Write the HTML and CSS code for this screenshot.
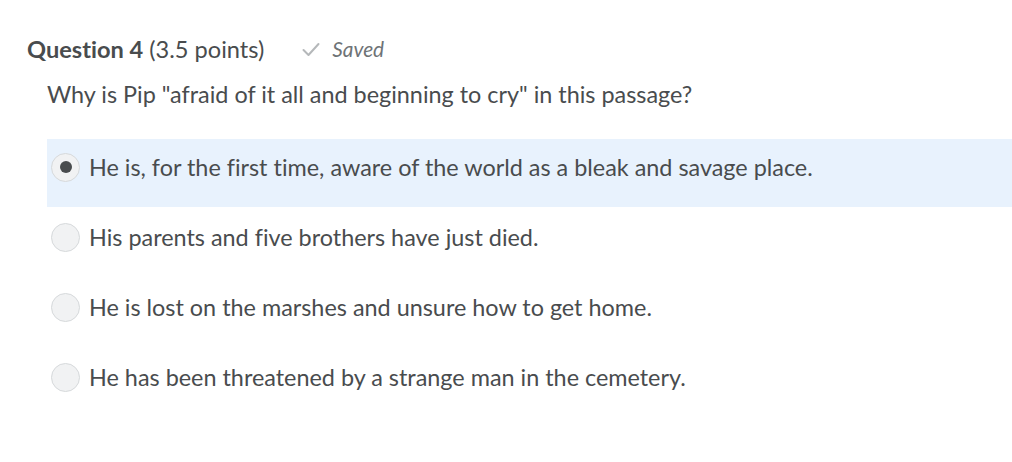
FILE: index.html
```html
<!DOCTYPE html>
<html>
<head>
<meta charset="utf-8">
<link rel="stylesheet" href="styles.css">
</head>
<body>
<div class="page">
  <div class="header">
    <h2 class="title"><strong>Question 4</strong> (3.5 points)</h2>
    <span class="saved">
      <svg class="check" width="18" height="15" viewBox="0 0 18 15"><path d="M1.5 8 L6.5 13 L16.5 2" fill="none" stroke="#b5b8ba" stroke-width="2" stroke-linecap="round" stroke-linejoin="round"/></svg>
      <em>Saved</em>
    </span>
  </div>
  <div class="question">
    <p class="prompt">Why is Pip "afraid of it all and beginning to cry" in this passage?</p>
    <div class="options">
      <label class="option selected"><span class="radio"><span class="dot"></span></span><span class="text">He is, for the first time, aware of the world as a bleak and savage place.</span></label>
      <label class="option"><span class="radio"></span><span class="text">His parents and five brothers have just died.</span></label>
      <label class="option"><span class="radio"></span><span class="text">He is lost on the marshes and unsure how to get home.</span></label>
      <label class="option"><span class="radio"></span><span class="text">He has been threatened by a strange man in the cemetery.</span></label>
    </div>
  </div>
</div>
</body>
</html>
```
FILE: styles.css
```css
html, body {
  margin: 0;
  padding: 0;
  background: #ffffff;
}
body {
  font-family: Lato, "Open Sans", sans-serif;
  color: #494c4e;
  font-variant-ligatures: none;
}
.page {
  padding: 35px 0 0 27px;
}
.header {
  display: flex;
  align-items: center;
  gap: 38px;
  height: 28px;
}
.title {
  margin: 0;
  font-size: 23.6px;
  line-height: 28px;
  font-weight: 400;
  color: #494c4e;
}
.title strong {
  font-weight: 700;
}
.saved {
  display: flex;
  align-items: center;
  gap: 12px;
  color: #6e7376;
  font-size: 20.8px;
  line-height: 28px;
}
.check {
  margin-top: 1px;
}
.question {
  padding-left: 20px;
}
.prompt {
  margin: 16px 0 0 0;
  font-size: 23.4px;
  line-height: 30px;
}
.options {
  display: flex;
  flex-direction: column;
  margin-top: 30px;
}
.option {
  display: flex;
  align-items: center;
  height: 30px;
  padding: 13px 0 27px 4px;
  gap: 9px;
  font-size: 23.4px;
  line-height: 30px;
}
.option.selected {
  background: #e8f2fd;
  padding-bottom: 25px;
  margin-bottom: 2px;
}
.radio {
  width: 27px;
  height: 27px;
  border-radius: 50%;
  border: 1px solid #d6d9db;
  background: #f1f2f3;
  display: flex;
  align-items: center;
  justify-content: center;
  flex: none;
}
.dot {
  width: 12px;
  height: 12px;
  border-radius: 50%;
  background: #494c4e;
}
```
